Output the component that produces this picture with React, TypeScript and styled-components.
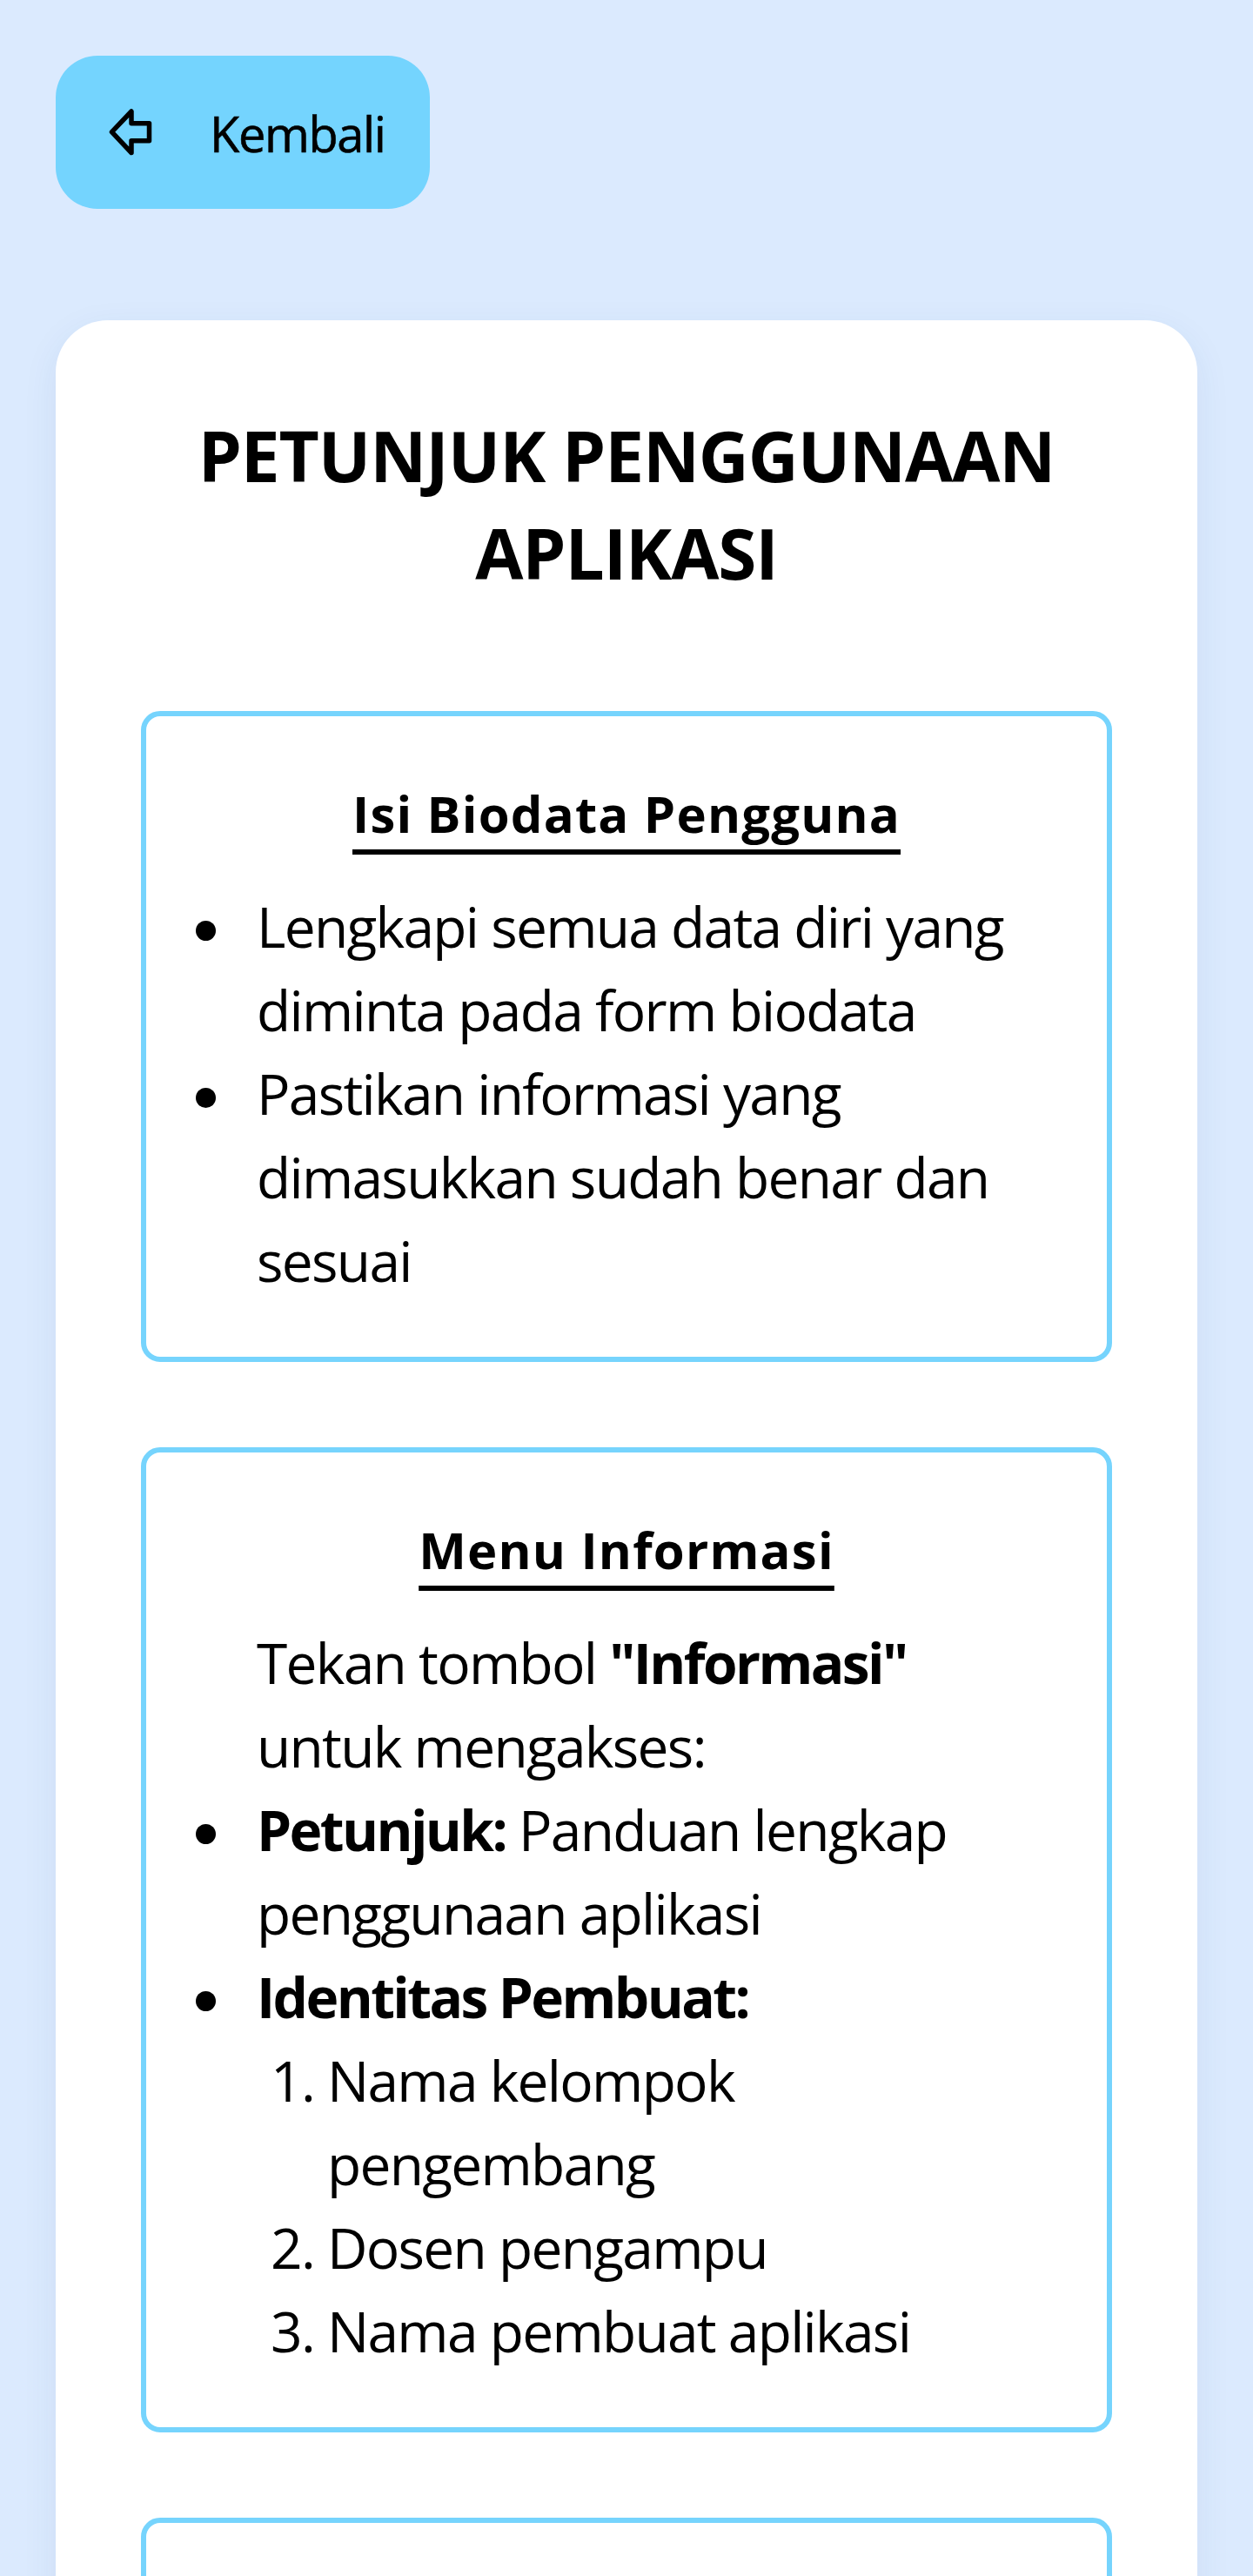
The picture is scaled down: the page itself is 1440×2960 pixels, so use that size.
import React from "react";
import styled, { createGlobalStyle } from "styled-components";

const GlobalStyle = createGlobalStyle`
  html, body {
    margin: 0;
    padding: 0;
    background: #dbeafe;
  }
  body {
    font-family: "Open Sans", "Noto Sans", sans-serif;
    color: #000;
  }
`;

const Page = styled.main`
  display: flex;
  flex-direction: column;
  align-items: flex-start;
  gap: 128px;
  padding: 64px 64px 128px;
  box-sizing: border-box;
  min-height: 2960px;
`;

const BackButton = styled.button`
  display: flex;
  align-items: center;
  gap: 66px;
  height: 176px;
  padding: 0 52px 0 61px;
  border: none;
  border-radius: 48px;
  background: #74d4fe;
  color: #000;
  font-family: "Open Sans", "Noto Sans", sans-serif;
  cursor: pointer;
`;

const BackLabel = styled.span`
  font-size: 56px;
  line-height: 76px;
  padding-top: 2px;
  letter-spacing: -1.4px;
  font-weight: 400;
  -webkit-text-stroke: 0.6px #000;
`;

const Card = styled.section`
  align-self: stretch;
  background: #ffffff;
  border-radius: 60px;
  padding: 99px 98px 120px;
  box-shadow: 0 12px 40px rgba(40, 80, 140, 0.08);
`;

const Title = styled.h1`
  margin: 0;
  text-align: center;
  font-size: 80px;
  line-height: 112px;
  font-weight: 700;
  letter-spacing: -1.05px;
`;

const Sections = styled.div`
  display: flex;
  flex-direction: column;
  gap: 98px;
  margin-top: 126px;
`;

const Section = styled.article`
  border: 6px solid #76d4fd;
  border-radius: 22px;
  padding: 70px 87px 62px;
`;

const SectionTitle = styled.h2`
  margin: 0 0 40px;
  text-align: center;
  font-size: 58px;
  line-height: 84px;
  font-weight: 700;
  letter-spacing: 1.2px;
  text-decoration: underline;
  text-decoration-thickness: 6px;
  text-underline-offset: 19px;
`;

const Paragraph = styled.p`
  margin: 0;
  padding-left: 40px;
  font-size: 64px;
  line-height: 96px;
  letter-spacing: -1.7px;
`;

const BulletList = styled.ul`
  margin: 0;
  padding-left: 40px;
  list-style: none;
  font-size: 64px;
  line-height: 96px;
  letter-spacing: -1.7px;
`;

const BulletItem = styled.li`
  position: relative;

  &::before {
    content: "";
    position: absolute;
    left: -70px;
    top: 41px;
    width: 23px;
    height: 23px;
    border-radius: 50%;
    background: #000;
  }
`;

const NumberList = styled.ol`
  margin: 0;
  padding-left: 81px;
  list-style: decimal;
`;

const Strong = styled.strong`
  font-weight: 700;
  letter-spacing: -2.6px;
`;

function ArrowIcon() {
  return (
    <svg width="50" height="54" viewBox="0 0 50 54" fill="none" aria-hidden="true">
      <path
        d="M3.5 26.7 L26 3 V16.7 H46.5 V36.7 H26 V50.5 Z"
        stroke="#000"
        strokeWidth="5.5"
        strokeLinejoin="round"
      />
    </svg>
  );
}

export default function App() {
  return (
    <>
      <GlobalStyle />
      <Page>
        <BackButton type="button">
          <ArrowIcon />
          <BackLabel>Kembali</BackLabel>
        </BackButton>
        <Card>
          <Title>PETUNJUK PENGGUNAAN APLIKASI</Title>
          <Sections>
            <Section>
              <SectionTitle>Isi Biodata Pengguna</SectionTitle>
              <BulletList>
                <BulletItem>Lengkapi semua data diri yang diminta pada form biodata</BulletItem>
                <BulletItem>Pastikan informasi yang dimasukkan sudah benar dan sesuai</BulletItem>
              </BulletList>
            </Section>
            <Section>
              <SectionTitle>Menu Informasi</SectionTitle>
              <Paragraph>
                Tekan tombol <Strong>"Informasi"</Strong> untuk mengakses:
              </Paragraph>
              <BulletList>
                <BulletItem>
                  <Strong>Petunjuk:</Strong> Panduan lengkap penggunaan aplikasi
                </BulletItem>
                <BulletItem>
                  <Strong>Identitas Pembuat:</Strong>
                  <NumberList>
                    <li>Nama kelompok pengembang</li>
                    <li>Dosen pengampu</li>
                    <li>Nama pembuat aplikasi</li>
                  </NumberList>
                </BulletItem>
              </BulletList>
            </Section>
            <Section>
              <SectionTitle>Tombol Kembali</SectionTitle>
              <BulletList>
                <BulletItem>Tekan tombol "Kembali" untuk kembali ke halaman sebelumnya</BulletItem>
              </BulletList>
            </Section>
          </Sections>
        </Card>
      </Page>
    </>
  );
}
